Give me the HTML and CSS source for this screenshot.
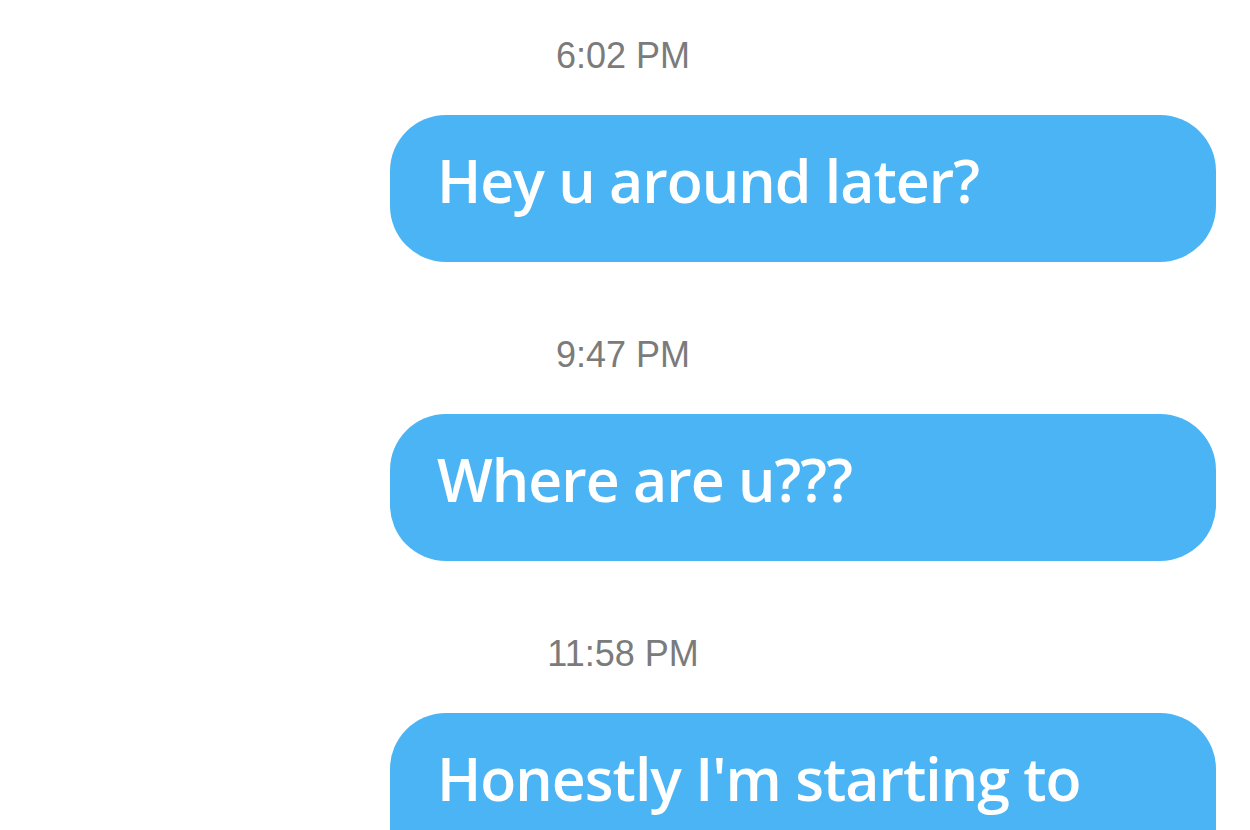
FILE: index.html
```html
<!DOCTYPE html>
<html lang="en">
<head>
<meta charset="UTF-8">
<meta name="viewport" content="width=device-width, initial-scale=1.0">
<title>Messages</title>
<link rel="stylesheet" href="styles.css">
</head>
<body>
<div class="chat">
    <div class="msg">
        <div class="time">6:02 PM</div>
        <div class="bubble">Hey u around later?</div>
    </div>
    <div class="msg">
        <div class="time">9:47 PM</div>
        <div class="bubble">Where are u???</div>
    </div>
    <div class="msg">
        <div class="time">11:58 PM</div>
        <div class="bubble">Honestly I'm starting to think ur ignoring me</div>
    </div>
</div>
</body>
</html>
```

FILE: styles.css
```css
body {
    margin: 0;
    padding: 0;
    background: #ffffff;
    overflow: hidden;
}
.chat {
    padding-top: 36px;
}
.msg {
    margin-bottom: 73px;
}
.time {
    font-family: 'Liberation Sans', Arial, sans-serif;
    font-size: 36px;
    line-height: 40px;
    height: 40px;
    color: #7b7b7b;
    text-align: center;
    padding-right: 4px;
    margin-bottom: 39px;
}
.bubble {
    box-sizing: border-box;
    width: 826px;
    margin-left: auto;
    margin-right: 34px;
    min-height: 145px;
    padding: 28px 47px 45px 47px;
    background: #4bb4f4;
    color: #ffffff;
    border-radius: 56px;
    font-family: 'Open Sans', sans-serif;
    font-weight: 600;
    font-size: 59px;
    line-height: 74px;
    letter-spacing: -1px;
}
```
